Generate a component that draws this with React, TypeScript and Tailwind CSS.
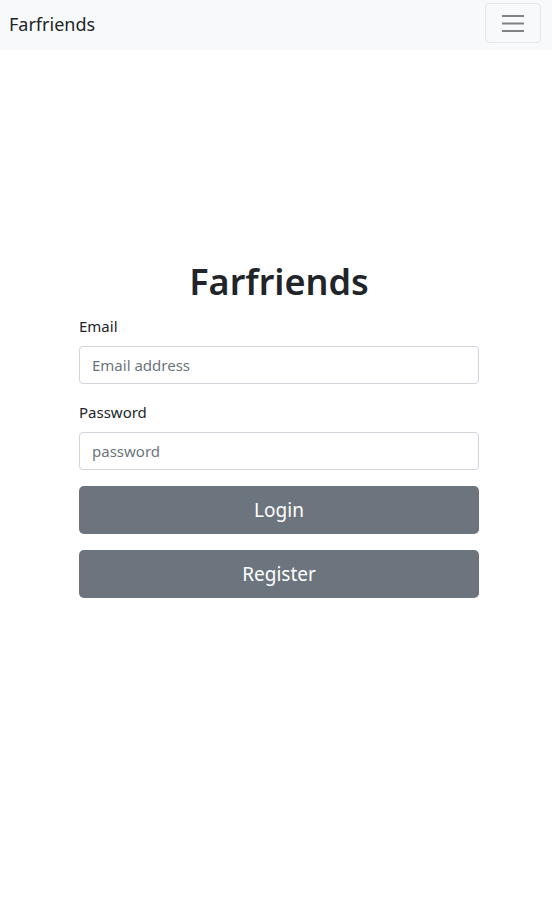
const font = { fontFamily: '"Noto Sans", "Open Sans", sans-serif' };

function Navbar() {
  return (
    <nav className="flex h-[50px] items-start justify-between bg-[#f8f9fa] pl-[9px] pr-[11px]">
      <span className="mt-[12px] text-[18px] leading-[24px] text-[#212529]">
        Farfriends
      </span>
      <button className="mt-[3px] flex h-[40px] w-[56px] items-center justify-center rounded-[4px] border border-[#e5e6e7]">
        <svg width="30" height="30" viewBox="0 0 30 30">
          <path
            d="M4 8h22M4 15.5h22M4 23h22"
            stroke="#808285"
            strokeWidth="2"
            strokeLinecap="butt"
          />
        </svg>
      </button>
    </nav>
  );
}

function Field({ label, placeholder, type }: { label: string; placeholder: string; type: string }) {
  return (
    <div className="mb-4">
      <label className="mb-2 block text-[15px] leading-6 text-[#212529]">{label}</label>
      <input
        type={type}
        placeholder={placeholder}
        className="block h-[38px] w-full rounded-[4px] border border-[#ced4da] px-3 text-[15px] text-[#495057] placeholder:text-[#6c757d] outline-none"
      />
    </div>
  );
}

export default function App() {
  return (
    <div className="min-h-[912px] bg-white" style={font}>
      <Navbar />
      <main className="ml-[79px] w-[400px] pt-[208px]">
        <h1 className="mb-2 text-center text-[36px] font-semibold leading-[48px] text-[#212529]">
          Farfriends
        </h1>
        <form>
          <Field label="Email" placeholder="Email address" type="email" />
          <Field label="Password" placeholder="password" type="password" />
          <button
            type="button"
            className="mb-4 block h-[48px] w-full rounded-[5px] bg-[#6c757d] text-[19px] text-white"
          >
            Login
          </button>
          <button
            type="button"
            className="block h-[48px] w-full rounded-[5px] bg-[#6c757d] text-[19px] text-white"
          >
            Register
          </button>
        </form>
      </main>
    </div>
  );
}
